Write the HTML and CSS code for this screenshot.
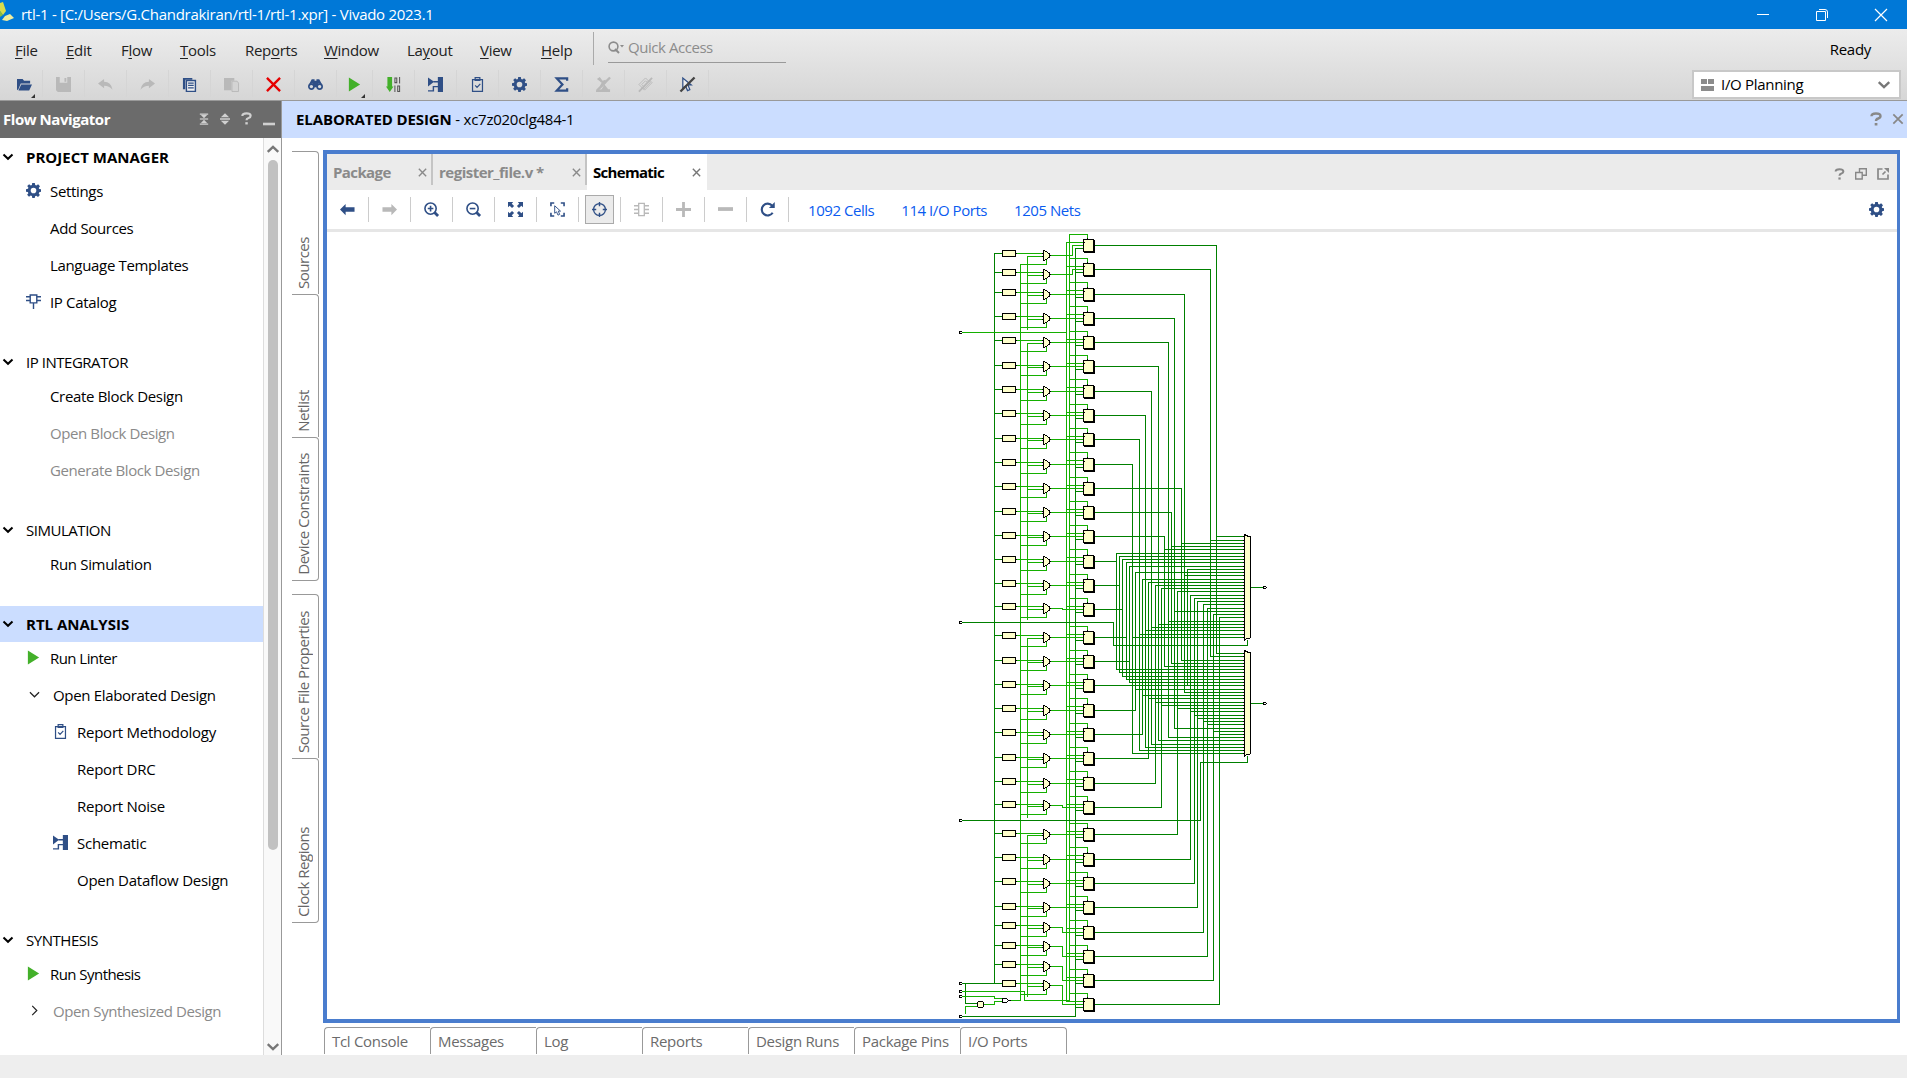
FILE: index.html
```html
<!DOCTYPE html>
<html lang="en">
<head>
<meta charset="utf-8">
<title>rtl-1 - Vivado 2023.1</title>
<link rel="stylesheet" href="styles.css">
</head>
<body>
<svg class="defs" aria-hidden="true">
  <symbol id="gear" viewBox="0 0 16 16"><path fill="currentColor" fill-rule="evenodd" d="M6.6 0h2.8l.4 2.2 1.2.5 1.9-1.3 2 2-1.3 1.8.5 1.3 2.1.3v2.6l-2.1.4-.5 1.3 1.2 1.8-2 2-1.8-1.3-1.3.5L9.3 16H6.700l-.4-2.100-1.300-.5-1.800 1.200-2-2 1.300-1.800-.5-1.300L0 9.200V6.600l2.100-.4.500-1.200-1.300-1.800 2-2L5.100 2.600l1.200-.5zM8 5a3 3 0 1 0 0 6 3 3 0 0 0 0-6z"/></symbol>
  <symbol id="play" viewBox="0 0 16 16"><path fill="#43b02a" d="M2 .5 14 8 2 15.500z"/></symbol>
  <symbol id="chev" viewBox="0 0 12 12"><path d="M1.500 3.500 6 7.800l4.500-4.300" fill="none" stroke="currentColor" stroke-width="2"/></symbol>
  <symbol id="thin" viewBox="0 0 12 12"><path d="M1 3.500 6 8.500l5-5" fill="none" stroke="currentColor" stroke-width="1.300"/></symbol>
  <symbol id="clip" viewBox="0 0 16 16"><g fill="none" stroke="currentColor" stroke-width="1.300"><path d="M2.700 2.700h10.600v12.600H2.700zM5.500.7h5v3h-5zM5.500 9l2 2L11 7.300"/></g></symbol>
  <symbol id="sch" viewBox="0 0 16 16"><path fill="currentColor" d="M0 .5 6.500 5 0 10zM10.500 0H16v16h-5.500v-5H6.500v4.500H0V14h5V9.700h5.500V5.800H6V4.300h4.500z"/></symbol>
  <symbol id="ipc" viewBox="0 0 16 16"><path d="M4.500 1h7v8.500h-7zM0 3h4.500M0 7h4.500M11.500 3H16M11.500 7H16M8 9.500V16" fill="none" stroke="currentColor" stroke-width="1.500"/></symbol>
  <symbol id="x" viewBox="0 0 12 12"><path d="m2 2 8 8M10 2l-8 8" fill="none" stroke="currentColor" stroke-width="1.500"/></symbol>
  <symbol id="help" viewBox="0 0 12 14"><path d="M1.500 4.200Q1.500 1.500 6 1.500T10.500 4Q10.500 5.700 8.200 6.500 6 7.200 6 9" fill="none" stroke="currentColor" stroke-width="2.400"/><path fill="currentColor" d="M4.700 11h2.700v2.500H4.700z"/></symbol>
  <symbol id="arr" viewBox="0 0 16 16"><path fill="currentColor" d="M0 8l6-6v3.500h9.500v5H6V14z"/></symbol>
  <symbol id="undo" viewBox="0 0 16 16"><path fill="currentColor" d="M0 7l6.500-5v3Q14 5 15.500 13.500 12 9.300 6.500 9.300V12z"/></symbol>
</svg>

<header class="titlebar">
  <svg class="logo" viewBox="0 0 14 20"><path fill="#d8dc4a" d="M0 1 3 0 6 9 3 13 0 9z"/><path fill="#8cbf3c" d="M0 9l3 4-3 2z"/><path fill="#f0eda0" d="M5 14l5-2 4 4-7 3-5-1z"/></svg>
  <span class="title">rtl-1 - [C:/Users/G.Chandrakiran/rtl-1/rtl-1.xpr] - Vivado 2023.1</span>
  <span class="winbtns">
    <svg width="12" height="12"><path d="M0 5.500h12" stroke="#fff"/></svg>
    <svg width="12" height="12"><path d="M.5 2.500h9v9h-9zM3 .5h6q2.500 0 2.500 2.500v6" fill="none" stroke="#fff"/></svg>
    <svg width="12" height="12"><path d="m0 0 12 12M12 0 0 12" stroke="#fff" stroke-width="1.200"/></svg>
  </span>
</header>

<section class="topbar">
  <div class="menurow">
    <nav class="menu">
      <span><u>F</u>ile</span><span><u>E</u>dit</span><span>F<u>l</u>ow</span><span><u>T</u>ools</span><span>Rep<u>o</u>rts</span><span><u>W</u>indow</span><span>La<u>y</u>out</span><span><u>V</u>iew</span><span><u>H</u>elp</span>
    </nav>
    <div class="quick"><svg width="17" height="13" viewBox="0 0 17 13"><circle cx="5.500" cy="5.500" r="4.400" fill="none" stroke="#8c8c8c" stroke-width="1.600"/><path d="m7 8 4 4" stroke="#8c8c8c" stroke-width="2"/><path d="M12 4h4l-2 2.500z" fill="#8c8c8c"/></svg><span>Quick Access</span></div>
    <span class="ready">Ready</span>
  </div>
  <div class="toolrow">
    <div class="tools">
      <i class="wide"><svg viewBox="0 0 16 16"><path fill="currentColor" d="M0 2h6l1.500 2H14v3H4L1.500 13 0 14zM4.500 8H16l-3 6.500H1.500z"/></svg></i>
      <i class="off"><svg viewBox="0 0 16 16"><path fill="currentColor" fill-rule="evenodd" d="M0 0h16v16H2l-2-2zM4 0v6h8V0zm5 1h2v4H9z"/></svg></i>
      <i class="off"><svg><use href="#undo"/></svg></i>
      <i class="off"><svg class="flip"><use href="#undo"/></svg></i>
      <i><svg viewBox="0 0 16 16"><path fill="currentColor" d="M1 1h10v2H3.500v10H1z"/><path d="M4.700 3.700h9.600v11.600H4.700z" fill="#f0f0f0" stroke="currentColor" stroke-width="1.500"/><path d="M6.500 6.500h6M6.500 9h6M6.500 11.500h6" stroke="currentColor" stroke-width="1.300"/></svg></i>
      <i class="off"><svg viewBox="0 0 16 16"><path fill="currentColor" d="M0 1h11v3H8v10H0z"/><path fill="#d4d4d4" stroke="currentColor" d="M8.500 4.500H14l1.500 2v9h-7z"/></svg></i>
      <i><svg viewBox="0 0 16 16"><path d="m1 1 14 14M15 1 1 15" stroke="#e60000" stroke-width="2.500"/></svg></i>
      <i><svg viewBox="0 0 16 16"><g fill="none" stroke="currentColor" stroke-width="1.800"><circle cx="3.600" cy="10.200" r="2.700"/><circle cx="12.400" cy="10.200" r="2.700"/></g><path fill="currentColor" d="M1 8 4 2.500h3V4h2V2.500h3L15 8l-4-1-1 4H6L5 7z"/></svg></i>
      <i class="run"><svg><use href="#play"/></svg></i>
      <i><svg viewBox="0 0 16 16"><path fill="#43b02a" d="M1.500 0h5v10H8l-4 6-4-6h1.500z"/><path d="M9.500 1h2v5h-2zM14.500 0v7M9.500 9v7M12.500 9.500h2v6h-2z" fill="none" stroke="#555" stroke-width="1.100"/></svg></i>
      <i><svg><use href="#sch"/></svg></i>
      <i><svg><use href="#clip"/></svg></i>
      <i><svg><use href="#gear"/></svg></i>
      <i><svg viewBox="0 0 16 16"><path d="M14 4V1.500H3L9 8l-6 6.500h11V12" fill="none" stroke="currentColor" stroke-width="2.400"/></svg></i>
      <i class="off"><svg viewBox="0 0 16 16"><path fill="currentColor" d="M1 2l3-2 3 4 3-1 1 3-5 5-2-1 2-4zM9 8l4 5h2v3H0v-2l6-1z"/><path d="M15 .5 1 14.500" stroke="currentColor" stroke-width="2.500"/></svg></i>
      <i class="off"><svg viewBox="0 0 16 16"><path d="M1 8l7-7 5 5-7 7zM4 11l3 3 8-8-2-2M4 8l4-4 2 2-4 4z" fill="none" stroke="currentColor"/><path d="M15 1 1 15.500" stroke="currentColor" stroke-width="2"/></svg></i>
      <i><svg viewBox="0 0 16 16"><path d="M3 1v11l3-2.500 2 5 2.500-1-2-5H12z" fill="#eee" stroke="currentColor" stroke-width="1.300"/><path d="M15.500.5.500 15.500" stroke="#444" stroke-width="2.500"/></svg></i>
    </div>
    <div class="combo"><svg width="13" height="12"><path fill="#8c8c8c" d="M0 0h6v5H0zM7 0h6v5H7zM0 7h13v5H0z"/></svg><span>I/O Planning</span><svg class="drop"><use href="#chev"/></svg></div>
  </div>
</section>

<div class="work">
  <aside class="flow">
    <div class="flowhead"><b>Flow Navigator</b>
      <span class="hicons">
        <svg width="10" height="12" viewBox="0 0 12 14"><path d="M1 1h10M1 13h10" stroke="currentColor" stroke-width="1.500"/><path fill="currentColor" d="M2 2h8L6 6zM2 12h8L6 8z"/><path d="M1 7h10" stroke="currentColor" stroke-width="1.400"/></svg>
        <svg width="10" height="12" viewBox="0 0 12 14"><path fill="currentColor" d="M1 5l5-5 5 5zM1 9l5 5 5-5zM0 6h12v2H0z"/></svg>
        <svg width="11" height="13"><use href="#help"/></svg>
        <svg width="12" height="14"><path d="M0 12h12" stroke="currentColor" stroke-width="2.600"/></svg>
      </span>
    </div>
    <div class="flowbody">
      <div class="tree">
        <section><h3 class="on"><svg><use href="#chev"/></svg>PROJECT MANAGER</h3>
          <ul><li><svg><use href="#gear"/></svg>Settings</li><li>Add Sources</li><li>Language Templates</li><li><svg><use href="#ipc"/></svg>IP Catalog</li></ul></section>
        <section><h3><svg><use href="#chev"/></svg>IP INTEGRATOR</h3>
          <ul><li>Create Block Design</li><li class="dis">Open Block Design</li><li class="dis">Generate Block Design</li></ul></section>
        <section><h3><svg><use href="#chev"/></svg>SIMULATION</h3>
          <ul><li>Run Simulation</li></ul></section>
        <section><h3 class="on sel"><svg><use href="#chev"/></svg>RTL ANALYSIS</h3>
          <ul><li class="tight"><svg><use href="#play"/></svg>Run Linter</li><li class="sub"><svg class="tw"><use href="#thin"/></svg>Open Elaborated Design</li>
          <li class="deep"><svg><use href="#clip"/></svg>Report Methodology</li><li class="deep">Report DRC</li><li class="deep">Report Noise</li><li class="deep"><svg><use href="#sch"/></svg>Schematic</li><li class="deep">Open Dataflow Design</li></ul></section>
        <section><h3><svg><use href="#chev"/></svg>SYNTHESIS</h3>
          <ul><li class="tight"><svg><use href="#play"/></svg>Run Synthesis</li><li class="sub dis"><svg class="tw right"><use href="#thin"/></svg>Open Synthesized Design</li></ul></section>
      </div>
      <div class="scroll"><svg class="up"><use href="#chev"/></svg><div class="thumb"></div><svg><use href="#chev"/></svg></div>
    </div>
  </aside>

  <main class="main">
    <div class="designhead"><span><b>ELABORATED DESIGN</b> - xc7z020clg484-1</span>
      <span class="dicons"><svg width="12" height="14"><use href="#help"/></svg><svg width="14" height="14"><use href="#x"/></svg></span></div>
    <div class="body">
      <div class="sidetabs">
        <div class="st s1"><span>Sources</span></div><div class="st s1"><span>Netlist</span></div><div class="st s1 last"><span>Device Constraints</span></div>
        <div class="st s2"><span>Source File Properties</span></div><div class="st s2 last"><span>Clock Regions</span></div>
      </div>
      <div class="center">
        <div class="frame">
          <div class="tabs">
            <div class="tab t1"><b>Package</b><svg><use href="#x"/></svg></div>
            <div class="tab t2"><b>register_file.v *</b><svg><use href="#x"/></svg></div>
            <div class="tab t3"><b>Schematic</b><svg><use href="#x"/></svg></div>
            <span class="ticons"><svg width="11" height="12"><use href="#help"/></svg>
              <svg width="12" height="12"><path d="M.7 4.500h6.500v6.500H.7zM4.500 4V.7h6.800v6.500H7.500" fill="none" stroke="currentColor" stroke-width="1.400"/></svg>
              <svg width="12" height="12"><path d="M5.500 1H1v10h10V6.500M5.500 6.500l3-3" fill="none" stroke="currentColor" stroke-width="1.700"/><path fill="currentColor" d="M7 0h5v5z"/></svg></span>
          </div>
          <div class="schbar">
            <i><svg><use href="#arr"/></svg></i>
            <i class="off"><svg class="flip"><use href="#arr"/></svg></i>
            <i><svg viewBox="0 0 16 16"><g fill="none" stroke="currentColor" stroke-width="1.700"><circle cx="7" cy="7" r="6"/><path d="M4 7h6M7 4v6"/></g><path d="m11 11 4 4" stroke="currentColor" stroke-width="3"/></svg></i>
            <i><svg viewBox="0 0 16 16"><g fill="none" stroke="currentColor" stroke-width="1.700"><circle cx="7" cy="7" r="6"/><path d="M4 7h6"/></g><path d="m11 11 4 4" stroke="currentColor" stroke-width="3"/></svg></i>
            <i><svg viewBox="0 0 16 16"><path fill="currentColor" d="M0 0h5.500L4 1.800l2.500 2.400-2.200 2.200L1.800 4 0 5.500zM16 0v5.500L14.200 4l-2.500 2.400-2.200-2.200L12 1.800 10.500 0zM0 16v-5.500L1.800 12l2.500-2.400 2.200 2.200L4 14.200 5.500 16zM16 16h-5.500l1.500-1.800-2.500-2.400 2.200-2.200L14.200 12l1.800-1.500z"/></svg></i>
            <i><svg viewBox="0 0 16 16"><path d="M1 4.500V1h3.500M11.500 1H15v3.500M15 11.500V15h-3.500M4.500 15H1v-3.500" fill="none" stroke="currentColor" stroke-width="1.700"/><path d="M5 4v8l2-1.500 1.500 3.500 1.800-.8L8.800 9.700h2.400z" fill="none" stroke="currentColor"/></svg></i>
            <i class="pressed"><svg viewBox="0 0 16 16"><circle cx="8" cy="8" r="6.300" fill="none" stroke="currentColor" stroke-width="1.400"/><path d="M8 0v4.500M8 11.500V16M0 8h4.500M11.500 8H16" stroke="currentColor" stroke-width="1.500"/></svg></i>
            <i class="off"><svg viewBox="0 0 16 16"><path d="M5 1.500h6v13H5zM0 4h5M0 8h5M0 12h5M11 4h5M11 8h5M11 12h5" fill="none" stroke="currentColor" stroke-width="1.400"/></svg></i>
            <i class="off"><svg viewBox="0 0 16 16"><path d="M0 8h16M8 0v16" stroke="currentColor" stroke-width="3"/></svg></i>
            <i class="off"><svg viewBox="0 0 16 16"><path d="M0 7.500h16" stroke="currentColor" stroke-width="4"/></svg></i>
            <i><svg viewBox="0 0 16 16"><path d="M13.500 11.500A6.300 6.300 0 1 1 13 4" fill="none" stroke="currentColor" stroke-width="2.300"/><path fill="currentColor" d="M15.700 0v6.500H9.500z"/></svg></i>
            <span class="links"><a>1092 Cells</a><a>114 I/O Ports</a><a>1205 Nets</a></span>
            <svg class="cfg"><use href="#gear"/></svg>
          </div>
          <svg id="canvas" class="canvas" viewBox="327 232 1570 787" shape-rendering="crispEdges"></svg>
        </div>
        <div class="bottomtabs"><span>Tcl Console</span><span>Messages</span><span>Log</span><span>Reports</span><span>Design Runs</span><span>Package Pins</span><span>I/O Ports</span></div>
      </div>
    </div>
  </main>
</div>
<footer class="status"></footer>
<script src="schematic.js"></script>
</body>
</html>
```
FILE: styles.css
```css
* { box-sizing: border-box; }
body { margin: 0; width: 1907px; height: 1078px; overflow: hidden; display: flex; flex-direction: column; background: #fff; color: #000; font: 15px/20px "Open Sans", "Noto Sans", sans-serif; letter-spacing: -0.3px; }
svg { display: block; flex: none; overflow: visible; }
.defs { position: absolute; width: 0; height: 0; }
i { font-style: normal; }

.titlebar { height: 29px; flex: none; background: #0078d7; color: #fff; display: flex; align-items: center; }
.title { padding-bottom: 2px; letter-spacing: -0.28px; }
.logo { width: 14px; height: 20px; margin: -5px 7px 0 0; }
.winbtns { margin-left: auto; display: flex; gap: 47px; padding-right: 20px; }

.topbar { height: 72px; flex: none; background: linear-gradient(#ececec, #d6d6d6); border-bottom: 1px solid #999; }
.menurow { height: 41px; display: flex; color: #222; }
.menu { display: grid; grid-template-columns: 51px 55px 59px 65px 79px 83px 73px 61px 52px; padding: 11px 0 0 15px; }
.menu u { text-underline-offset: 2px; }
.quick { margin-top: 3px; height: 33px; border-left: 1px solid #aaa; padding: 5px 0 0 14px; display: flex; gap: 3px; color: #8c8c8c; position: relative; letter-spacing: -0.45px; }
.quick svg { margin-top: 4px; }
.quick::after { content: ""; position: absolute; left: 14px; bottom: 2px; width: 178px; height: 1px; background: #999; }
.ready { margin: 10px 36px 0 auto; color: #000; }
.toolrow { display: flex; height: 30px; }
.tools { display: flex; color: #2f4f86; height: 27px; padding-left: 1px; }
.tools i { width: 42px; display: flex; align-items: center; justify-content: center; border-right: 1px solid #d5d5d5; position: relative; }
.tools i svg { width: 15px; height: 15px; margin-top: 2px; }
.tools .off { color: #b9b9b9; }
.flip { transform: scaleX(-1); }
.tools .wide { padding-left: 5px; }
.tools .run { width: 36px; }
.wide::after, .run::after { content: ""; position: absolute; right: 7px; bottom: -1px; border: 2.5px solid transparent; border-right-color: #333; border-bottom-color: #333; }
.combo { margin-left: auto; margin-right: 6px; width: 209px; height: 29px; background: #fff; border: 2px solid #c8c8c8; display: flex; align-items: center; gap: 7px; padding: 0 8px 0 7px; }
.combo span { padding-bottom: 2px; }
.drop { width: 14px; height: 14px; color: #777; margin-left: auto; }

.work { display: flex; height: 954px; flex: none; }
.flow { width: 282px; flex: none; border-right: 1px solid #999; display: flex; flex-direction: column; }
.flowhead { height: 37px; background: #6b6b6b; color: #fff; display: flex; align-items: center; justify-content: space-between; padding: 0 6px 2px 3px; letter-spacing: -0.45px; }
.hicons { display: flex; gap: 11px; align-items: center; color: #d0d0d0; }
.flowbody { flex: 1; display: flex; }
.tree { flex: 1; padding-top: 1px; }
.tree section { margin-bottom: 23px; }
h3 { margin: 0; height: 36px; font-size: 15px; font-weight: 400; letter-spacing: -0.47px; display: flex; align-items: center; gap: 12px; padding-left: 2px; }
h3 svg { width: 12px; height: 12px; }
.on { font-weight: 700; letter-spacing: 0; }
.sel { background: #cbddff; }
ul { margin: -2px 0 0; padding: 0; list-style: none; }
li { height: 37px; display: flex; align-items: center; padding: 0 0 2px 50px; white-space: nowrap; letter-spacing: -0.33px; }
li svg { width: 15px; height: 15px; margin: -1px 9px 0 -24px; }
li .tw { width: 11px; height: 11px; margin: 0 13px 0 -24px; }
.right { transform: rotate(-90deg); }
.sub { padding-left: 53px; }
.deep { padding-left: 77px; letter-spacing: -0.25px; }
.tight { letter-spacing: -0.55px; }
.dis { color: #8a8a8a; letter-spacing: -0.4px; }
.tree li use { color: #2f4f86; }
.tree .tw use { color: #222; }
.scroll { width: 18px; border-left: 1px solid #ddd; background: #f9f9f9; display: flex; flex-direction: column; align-items: center; padding: 4px 0 1px; }
.scroll svg { width: 14px; height: 14px; color: #777; }
.up { transform: scaleY(-1); }
.thumb { width: 10px; height: 690px; margin: 4px 0 auto; border-radius: 5px; background: #c1c1c1; }

.main { flex: 1; display: flex; flex-direction: column; }
.designhead { height: 37px; background: #cbddff; display: flex; align-items: center; justify-content: space-between; padding: 0 2px 2px 14px; letter-spacing: -0.25px; }
.designhead b { letter-spacing: -0.1px; }
.dicons { display: flex; gap: 9px; color: #888; }
.body { flex: 1; display: flex; }
.sidetabs { width: 41px; padding: 13px 0 0 10px; }
.st { width: 27px; border: solid #999; border-width: 1px 1px 0 0; border-radius: 0 4px 0 0; display: flex; justify-content: center; align-items: flex-end; padding: 0 4px 5px 0; color: #666; }
.st span { writing-mode: vertical-rl; transform: rotate(180deg); letter-spacing: -0.47px; white-space: nowrap; }
.s1 { height: 143px; }
.s2 { height: 164px; }
.last { border-bottom-width: 1px; border-radius: 0 4px 4px 0; }
.s1.last { height: 144px; margin-bottom: 13px; }
.s2.last { height: 165px; }
.center { width: 1577px; display: flex; flex-direction: column; padding-top: 12px; }
.frame { height: 873px; border: solid #4a7dce; border-width: 4px 3px 4px 4px; display: flex; flex-direction: column; }
.tabs { height: 36px; background: #ebebeb; display: flex; }
.tab { display: flex; align-items: center; justify-content: space-between; color: #8a8a8a; padding: 0 3px 0 6px; }
.tab b { letter-spacing: -0.6px; }
.tab svg { width: 11px; height: 11px; margin-top: 1px; }
.t1, .t2 { height: 31px; padding-top: 5px; border-right: 2px solid #c4c4c4; }
.t1 { width: 106px; }
.t2 { width: 154px; }
.t2 b { letter-spacing: -0.5px; }
.t3 { width: 120px; background: #fff; color: #000; }
.t3 b { letter-spacing: -0.7px; }
.t3 svg { color: #777; margin-right: 2px; }
.ticons { margin-left: auto; display: flex; gap: 10px; align-items: center; color: #888; padding: 4px 8px 0 0; }
.schbar { height: 42px; border-bottom: 3px solid #e6e6e6; display: flex; align-items: center; color: #2f4f86; }
.schbar i { width: 42px; height: 25px; border-right: 1px solid #ccc; display: flex; align-items: center; justify-content: center; }
.schbar i svg { width: 15px; height: 15px; }
.schbar .off { color: #b9b9b9; }
.schbar .pressed { width: 29px; height: 29px; margin: 0 7px 0 6px; border: 1px solid #aaa; background: #ebebeb; position: relative; }
.pressed::after { content: ""; position: absolute; right: -8px; top: 1px; width: 1px; height: 25px; background: #ccc; }
.links { display: flex; gap: 27px; margin-left: 19px; color: #0a5bf0; letter-spacing: -0.45px; }
.cfg { width: 15px; height: 15px; margin: 0 13px 0 auto; }
.canvas { width: 1570px; height: 787px; }
.bottomtabs { display: flex; margin: 4px 0 0 1px; color: #6b6b6b; }
.bottomtabs span { width: 106px; height: 27px; border: solid #999; border-width: 1px 0 0 1px; border-radius: 4px 0 0 0; padding: 3px 0 0 7px; }
.bottomtabs span:last-child { width: 107px; border-right-width: 1px; border-radius: 4px 4px 0 0; }
.status { flex: 1; background: #eee; }
```
FILE: schematic.js
```js
// Draws the elaborated register file: 32 constant/gate/register rows feeding two wide read muxes.
const LIGHT = '#14b000', DARK = '#008000', FILL = '#ffffcc';
const consts = [253,272,292,316,340,365,389,413,438,462,486,511,535,559,583,606,635,660,684,708,732,757,781,804,833,857,881,906,925,945,964,983];
const gates = [255,274,294,318,342,366,391,415,439,464,488,512,536,561,585,608,637,661,685,710,734,758,783,805,834,859,883,907,927,946,966,985];
const regs = [245,269,294,318,342,366,391,415,439,464,488,512,536,561,585,609,637,661,685,710,734,758,783,807,834,859,883,907,932,956,980,1004];
const enables = [234,258,282,306,331,355,379,404,428,452,477,501,525,549,574,598,626,650,674,698,723,747,771,796,823,847,872,896,920,945,969,993];
// vertical channel used by each register output
const chan = [1216,1210,1184,1174,1168,1158,1151,1145,1139,1132,1181,1171,1164,1116,1119,1122,1126,1129,1187,1135,1142,1148,1155,1161,1177,1190,1194,1197,1203,1207,1213,1219];
// mux pins, top to bottom, by register index
const pins = [0,1,10,11,12,13,14,15,16,17,18,19,2,20,21,22,23,24,25,26,27,28,29,3,30,31,4,5,6,7,8,9];
const pinA = [536,540,543,546,549,553,556,559,562,566,569,572,575,579,582,585,588,591,595,598,601,604,608,611,614,617,621,624,627,630,634,637];
const pinB = [653,656,660,663,666,669,672,676,679,682,685,689,692,695,698,702,705,708,711,715,718,721,724,728,731,734,737,740,744,747,750,753];

const out = [];
const wire = (color, ...p) => {
  let pts = '';
  for (let i = 0; i < p.length; i += 2) pts += (p[i] + .5) + ',' + (p[i + 1] + .5) + ' ';
  out.push(`<polyline points="${pts}" fill="none" stroke="${color}" stroke-linecap="square"/>`);
};
const box = (x, y, w, h, fill) => out.push(`<rect x="${x}" y="${y}" width="${w}" height="${h}" fill="${fill}"/>`);
const port = (x, y) => { box(x, y - 1, 3, 3, '#000'); box(x + 1, y, 2, 1, '#fff'); };

// shared nets
wire(DARK, 994, 253, 994, 983);
wire(LIGHT, 1020, 264, 1020, 1000);
[[256, 329], [344, 619], [638, 817], [836, 996]].forEach(([a, b]) => wire(LIGHT, 1027, a, 1027, b));
wire(LIGHT, 1066, 242, 1066, 1001);
wire(LIGHT, 1069, 234, 1069, 1000);
wire(DARK, 1075, 248, 1075, 1016);
wire(LIGHT, 962, 332, 1066, 332);
wire(DARK, 962, 622, 1113, 622, 1113, 645, 1247, 645, 1247, 640);
wire(DARK, 962, 820, 1200, 820, 1200, 762, 1247, 762, 1247, 756);
wire(DARK, 962, 983, 1002, 983);
wire(DARK, 965, 983, 965, 1003, 976, 1003);
wire(LIGHT, 965, 1013, 965, 1006, 977, 1006);
wire(LIGHT, 962, 991, 1024, 991, 1024, 1000, 1069, 1000);
wire(LIGHT, 962, 996, 994, 996, 994, 998, 1002, 998);
wire(LIGHT, 984, 1004, 994, 1004, 994, 1001, 1002, 1001);
wire(LIGHT, 1010, 1000, 1020, 1000);
wire(DARK, 962, 1016, 1075, 1016);

for (let i = 0; i < 32; i++) {
  const c = consts[i], g = gates[i], r = regs[i], e = enables[i];
  wire(DARK, 994, c, 1002, c);
  wire(LIGHT, 1017, c, 1042, c);
  wire(LIGHT, 1027, g + 1, 1042, g + 1);
  wire(LIGHT, 1020, g + 9, 1046, g + 9, 1046, g + 4);
  if (g === r) wire(LIGHT, 1051, g, 1083, g);
  else { const x = i < 2 ? 1072 : 1062; wire(LIGHT, 1051, g, x, g, x, r, 1083, r); }
  wire(LIGHT, 1069, e, 1087, e, 1087, r - 8);
  wire(LIGHT, 1066, e + 8, 1083, e + 8);
  wire(DARK, 1075, r + 3, 1083, r + 3);
  const a = pinA[pins.indexOf(i)], b = pinB[pins.indexOf(i)], x = chan[i];
  wire(DARK, 1095, r, x, r);
  wire(DARK, x, Math.min(r, a, b), x, Math.max(r, a, b));
  wire(DARK, x, a, 1242, a);
  wire(DARK, x, b, 1242, b);
}
for (let i = 0; i < 32; i++) {
  const c = consts[i], g = gates[i], r = regs[i];
  box(1002, c - 3, 14, 7, '#000');
  box(1003, c - 2, 12, 5, FILL);
  box(1016, c, 1, 1, '#000');
  box(1042, c, 1, 1, '#000');
  box(1042, g + 1, 1, 1, '#000');
  out.push(`<path d="M1043.500 ${g - 4.5}l3 1 3 2.500v3l-3 2.500-3 1z" fill="${FILL}" stroke="#000"/>`);
  box(1050, g, 1, 1, '#000');
  box(1043, g - 5, 1, 11, '#000');
  box(1084, r - 5, 11, 13, '#000');
  box(1083, r - 6, 11, 13, '#000');
  box(1084, r - 5, 9, 11, FILL);
  box(1084, r - 3, 1, 1, '#000');
  box(1087, r - 7, 1, 1, '#000');
}
[[534, 587, pinA], [650, 703, pinB]].forEach(([y, mid, list]) => {
  out.push(`<path d="M1244.500 ${y + .5}l3 1.500h2.500l.5 2v99l-.5 1h-2.500l-3 2z" fill="${FILL}" stroke="#000"/>`);
  list.forEach(p => box(1243, p, 1, 1, '#000'));
  wire(DARK, 1251, mid, 1263, mid);
  box(1263, mid - 1, 3, 3, '#000');
  box(1264, mid, 3, 1, '#fff');
  box(1266, mid, 1, 1, '#000');
});
[332, 622, 820, 983, 991, 996, 1016].forEach(y => port(959, y));
out.push(`<circle cx="980.500" cy="1004.500" r="3.300" fill="${FILL}" stroke="#000"/>`);
out.push(`<path d="M1002.500 998.500h4l2 2-2 2h-4z" fill="#fff" stroke="#000"/>`);
box(1008, 1000, 3, 1, '#000');
document.getElementById('canvas').innerHTML = out.join('');
```
